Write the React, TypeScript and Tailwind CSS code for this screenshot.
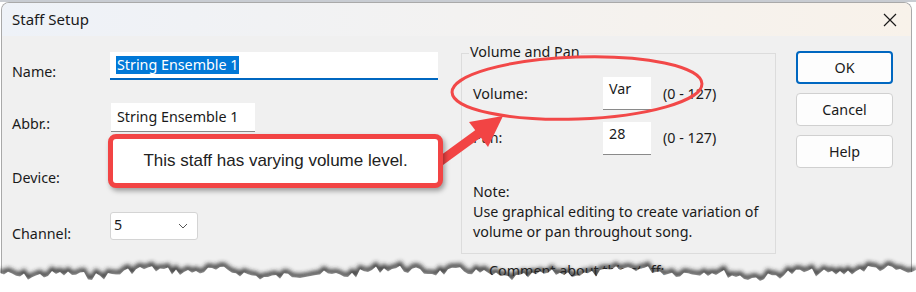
import React from "react";

function tornPath(): { fill: string; edge: string } {
  let seed = 7;
  const rnd = () => {
    seed = (seed * 9301 + 49297) % 233280;
    return seed / 233280;
  };
  const pts: [number, number][] = [];
  for (let x = 0; x <= 916; x += 4) {
    const base = 18 + Math.sin(x / 37) * 3 + Math.sin(x / 13) * 2;
    pts.push([x, base + (rnd() - 0.5) * 8]);
  }
  const edge = pts.map((p, i) => `${i ? "L" : "M"}${p[0]},${p[1].toFixed(1)}`).join(" ");
  return { fill: `${edge} L916,60 L0,60 Z`, edge };
}

export default function App() {
  const torn = tornPath();
  const font = { fontFamily: '"Noto Sans", "Open Sans", sans-serif' };
  return (
    <div className="relative w-[916px] h-[292px] overflow-hidden bg-white" style={font}>
      {/* desktop strip */}
      <div className="h-[2px] w-full bg-[#c8ccd2]" />
      <div className="flex">
        <div className="ml-[1px] w-[911px] rounded-t-[8px] border-l border-t border-r border-[#a9a9a9] overflow-hidden">
          {/* title bar */}
          <div className="h-[33px] flex items-center justify-between pl-[10px] pr-[14px] bg-gradient-to-r from-[#eef2f8] to-[#f8f2ea]">
            <span className="text-[15px] text-[#1a1a1a]">Staff Setup</span>
            <svg width="14" height="14" viewBox="0 0 14 14">
              <path d="M1 1 L13 13 M13 1 L1 13" stroke="#1a1a1a" strokeWidth="1.2" />
            </svg>
          </div>
          {/* body */}
          <div className="h-[260px] bg-[#f0f0f0] flex text-[14.3px] text-[#1a1a1a]">
            {/* left column */}
            <div className="w-[447px] pl-[10px] flex flex-col">
              <div className="flex mt-[16px]">
                <div className="w-[98px] pt-[10px] leading-[20px]">Name:</div>
                <div className="w-[328px] h-[28px] bg-white border-b-2 border-[#0067c0] flex items-center pl-[6px]">
                  <span className="bg-[#0078d7] text-white leading-[18px] px-[1px]">String Ensemble 1</span>
                </div>
              </div>
              <div className="flex mt-[21px]">
                <div className="w-[99px] pt-[11px] leading-[20px]">Abbr.:</div>
                <div className="w-[144px] h-[29px] bg-white border-b border-[#8a8a8a] flex items-center pl-[6px]">
                  String Ensemble 1
                </div>
              </div>
              <div className="flex mt-[34px]">
                <div className="w-[98px] leading-[20px]">Device:</div>
              </div>
              <div className="flex mt-[24px]">
                <div className="w-[98px] pt-[12px] leading-[20px]">Channel:</div>
                <div className="w-[88px] h-[28px] bg-white border border-[#d4d4d4] rounded-[3px] flex items-start justify-between pl-[3px] pr-[9px]">
                  <span className="leading-[24px]">5</span>
                  <svg className="mt-[10px]" width="10" height="6" viewBox="0 0 10 6">
                    <path d="M1 1 L5 5 L9 1" stroke="#555" strokeWidth="1" fill="none" />
                  </svg>
                </div>
              </div>
            </div>
            {/* middle group */}
            <div className="flex flex-col w-[330px]">
              <div className="relative mt-[17px] ml-[12px] w-[315px] h-[201px] border border-[#dcdcdc]">
                <span className="absolute left-[7px] top-[-12px] bg-[#f0f0f0] leading-[20px] px-[1px]">Volume and Pan</span>
                <div className="flex items-start mt-[23px] ml-[11px]">
                  <div className="w-[130px] pt-[7px] leading-[20px]">Volume:</div>
                  <div className="w-[48px] h-[33px] bg-white border-b border-[#8a8a8a] pl-[6px] leading-[24px]">Var</div>
                  <div className="ml-[12px] pt-[7px] leading-[20px]">(0 - 127)</div>
                </div>
                <div className="flex items-start mt-[12px] ml-[11px]">
                  <div className="w-[130px] pt-[6px] leading-[20px]">Pan:</div>
                  <div className="w-[48px] h-[33px] bg-white border-b border-[#8a8a8a] pl-[6px] leading-[24px]">28</div>
                  <div className="ml-[12px] pt-[6px] leading-[20px]">(0 - 127)</div>
                </div>
                <div className="mt-[27px] ml-[11px] leading-[20px]">
                  <div>Note:</div>
                  <div>Use graphical editing to create variation of</div>
                  <div>volume or pan throughout song.</div>
                </div>
              </div>
              <div className="ml-[40px] mt-[7px] leading-[20px]">Comment about this staff:</div>
            </div>
            {/* buttons */}
            <div className="flex flex-col gap-[9px] ml-[17px] mt-[15px]">
              <div className="w-[97px] h-[33px] bg-[#fdfdfd] border-2 border-[#0067c0] rounded-[4px] flex items-center justify-center">OK</div>
              <div className="w-[97px] h-[33px] bg-[#fdfdfd] border border-[#d0d0d0] rounded-[4px] flex items-center justify-center">Cancel</div>
              <div className="w-[97px] h-[33px] bg-[#fdfdfd] border border-[#d0d0d0] rounded-[4px] flex items-center justify-center">Help</div>
            </div>
          </div>
        </div>
      </div>

      {/* annotations */}
      <svg className="absolute left-0 top-0" width="916" height="292" viewBox="0 0 916 292">
        <ellipse cx="577" cy="88" rx="125" ry="31" transform="rotate(-2 577 88)" fill="none" stroke="#f24848" strokeWidth="3" />
        <line x1="438" y1="163" x2="486" y2="128" stroke="#f24444" strokeWidth="9" />
        <polygon points="503,116 469,122 488,147" fill="#f24444" />
      </svg>
      <div className="absolute left-[108px] top-[134px] w-[335px] h-[54px] bg-white border-[5px] border-[#f24444] rounded-[8px] shadow-[2px_3px_5px_rgba(0,0,0,0.35)] flex items-center justify-center">
        <span className="text-[17px] text-[#222]" style={{ fontFamily: '"Liberation Sans", Arial, sans-serif' }}>
          This staff has varying volume level.
        </span>
      </div>

      {/* torn edge */}
      <svg className="absolute left-0 top-[250px]" width="916" height="42" viewBox="0 0 916 42">
        <defs>
          <filter id="blur" x="-5%" y="-50%" width="110%" height="200%">
            <feGaussianBlur stdDeviation="2.2" />
          </filter>
        </defs>
        <path d={torn.edge} transform="translate(0,3)" stroke="#2a2a2a" strokeWidth="4" fill="none" filter="url(#blur)" />
        <path d={torn.fill} transform="translate(0,5)" fill="#ffffff" />
      </svg>
    </div>
  );
}
